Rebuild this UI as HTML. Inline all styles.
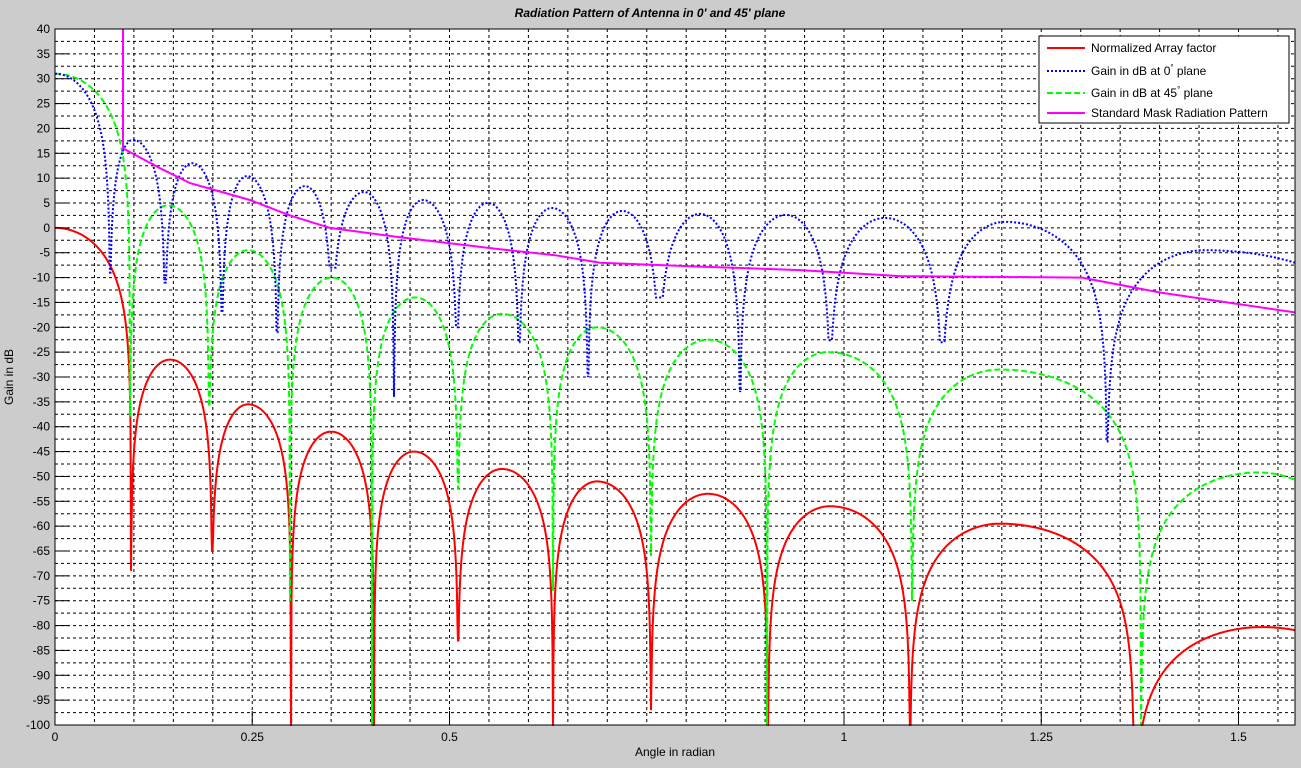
<!DOCTYPE html>
<html><head><meta charset="utf-8"><style>
html,body{margin:0;padding:0;background:#cccccc;}
svg{display:block;font-family:"Liberation Sans",Arial,sans-serif;}
</style></head><body>
<svg id="s" width="1301" height="768" xmlns="http://www.w3.org/2000/svg">
<rect x="0" y="0" width="1301" height="768" fill="#cccccc"/>
<rect x="55" y="29" width="1240" height="696" fill="#fff"/>
<g id="grid"></g>
<defs><clipPath id="c"><rect x="55" y="29" width="1240" height="697"/></clipPath></defs>
<g id="curves" clip-path="url(#c)"></g>
<rect x="55" y="29" width="1240" height="696" fill="none" stroke="#000" stroke-width="1"/>
<g id="ticks" font-size="12" fill="#000"></g>
<text x="650" y="17" text-anchor="middle" font-size="12" font-weight="bold" font-style="italic">Radiation Pattern of Antenna in 0' and 45' plane</text>
<text x="675" y="756" text-anchor="middle" font-size="12">Angle in radian</text>
<text transform="translate(13,377) rotate(-90)" text-anchor="middle" font-size="12">Gain in dB</text>
<g>
<rect x="1039" y="36" width="250" height="87" fill="#fff" stroke="#000"/>
<line x1="1047" y1="48" x2="1085" y2="48" stroke="#f00" stroke-width="2"/>
<line x1="1047" y1="71" x2="1085" y2="71" stroke="#00f" stroke-width="2" stroke-dasharray="2,2"/>
<line x1="1047" y1="93" x2="1085" y2="93" stroke="#0f0" stroke-width="2" stroke-dasharray="6,3"/>
<line x1="1047" y1="113" x2="1085" y2="113" stroke="#f0f" stroke-width="2"/>
<text x="1091" y="52" font-size="12">Normalized Array factor</text>
<text x="1091" y="75" font-size="12">Gain in dB at 0<tspan dy="-5" font-size="8">°</tspan><tspan dy="5"> plane</tspan></text>
<text x="1091" y="97" font-size="12">Gain in dB at 45<tspan dy="-5" font-size="8">°</tspan><tspan dy="5"> plane</tspan></text>
<text x="1091" y="117" font-size="12">Standard Mask Radiation Pattern</text>
</g>
</svg>
<script>
var NS="http://www.w3.org/2000/svg";
function Y(v){return 29+(40-v)*696/140;}
function el(p,t,a,txt){var e=document.createElementNS(NS,t);for(var k in a)e.setAttribute(k,a[k]);if(txt!==undefined)e.textContent=txt;p.appendChild(e);return e;}
var g=document.getElementById('grid'),tk=document.getElementById('ticks');
for(var i=1;i<56;i++){var y=Y(40-i*2.5);el(g,'line',{x1:55,x2:1295,y1:y,y2:y,stroke:'#000','stroke-dasharray':'3,3','stroke-width':1});}
for(var i=1;i<32;i++){var x=55+i*0.05*789;el(g,'line',{x1:x,x2:x,y1:29,y2:725,stroke:'#000','stroke-dasharray':'3,3','stroke-width':1});}
for(var v=40;v>=-100;v-=5){var y=Y(v);el(tk,'line',{x1:55,x2:69,y1:y,y2:y,stroke:'#000'});el(tk,'text',{x:50,y:y+4,'text-anchor':'end'},String(v));}
[[0,'0'],[0.25,'0.25'],[0.5,'0.5'],[1,'1'],[1.25,'1.25'],[1.5,'1.5']].forEach(function(a){var x=55+a[0]*789;el(tk,'line',{x1:x,x2:x,y1:711,y2:725,stroke:'#000'});el(tk,'text',{x:x,y:741,'text-anchor':'middle'},a[1]);});
// lobe model: nulls [x,depth], peaks [x,val] between them
function build(start,nulls,peaks,endX){
 var pts=[],xs=[55].concat(nulls.map(function(n){return n[0]}));
 for(var x=55;x<=1295;x+=0.5){
  var k=0;while(k<nulls.length&&x>nulls[k][0])k++;
  var v;
  if(k==0){var t=(x-55)/(nulls[0][0]-55);v=start+20*Math.log10(Math.max(Math.cos(Math.PI/2*t),1e-6));}
  else{var a=nulls[k-1][0],b=k<nulls.length?nulls[k][0]:endX,p=peaks[k-1];
   var t;if(x<=p[0])t=0.5*(x-a)/(p[0]-a);else t=0.5+0.5*(x-p[0])/(b-p[0]);
   v=p[1]+20*Math.log10(Math.max(Math.sin(Math.PI*t),1e-6));}
  var fl=-200;
  nulls.forEach(function(n){if(Math.abs(x-n[0])<1.5)fl=Math.max(fl,n[1]);});
  var dn=Infinity,dd=-100;nulls.forEach(function(n){var d=Math.abs(x-n[0]);if(d<dn){dn=d;dd=n[1];}});
  v=Math.max(v,dd);
  v=Math.max(v,-101);
  pts.push(x.toFixed(1)+','+Y(v).toFixed(1));
 }
 return pts.join(' ');
}
var cv=document.getElementById('curves');
var red=build(0,[[131,-69],[212,-65],[291,-101],[374,-101],[458,-83],[553,-101],[651,-97],[768,-101],[910,-101],[1134,-101]],
 [[170,-26.5],[248,-35.5],[331,-41],[414,-45],[502,-48.5],[597,-51],[708,-53.5],[830,-56],[1000,-59.5],[1262,-80.3]],1400);
var green=build(31,[[130,-38],[209,-36],[290,-75],[372,-101],[458,-52.5],[553,-73],[651,-66],[767,-101],[912,-75],[1141,-100]],
 [[168,4.5],[248,-4.5],[332,-10],[415,-14],[502,-17.3],[597,-20],[708,-22.5],[828,-25],[1000,-28.5],[1258,-49.2]],1360);
var blue=build(31,[[110,-9],[165,-11],[222,-17],[277,-21],[332,-8],[394,-34],[457,-20],[519,-23],[588,-30],[659,-14],[740,-33],[830,-22.6],[942,-23],[1107,-43]],
 [[133,17.7],[192,13],[247,10.4],[305,8.4],[364,7.2],[423,5.6],[488,5],[552,4],[622,3.4],[700,2.8],[786,2.6],[885,2],[1005,1.2],[1205,-4.5]],1400);
el(cv,'polyline',{points:red,fill:'none',stroke:'#f00','stroke-width':2});
el(cv,'polyline',{points:green,fill:'none',stroke:'#0f0','stroke-width':2,'stroke-dasharray':'6,3'});
el(cv,'polyline',{points:blue,fill:'none',stroke:'#00f','stroke-width':2,'stroke-dasharray':'2,2'});
var m=[[123,41],[123,16],[160,12],[190,9],[215,7.6],[250,5.6],[290,2.5],[330,0],[400,-1.9],[500,-4.3],[555,-5.5],[600,-7],[700,-7.8],[800,-8.5],[900,-9.7],[1082,-10],[1160,-13],[1295,-17]];
el(cv,'polyline',{points:m.map(function(p){return p[0]+','+Y(p[1]).toFixed(1)}).join(' '),fill:'none',stroke:'#f0f','stroke-width':2});
</script>
</body></html>
